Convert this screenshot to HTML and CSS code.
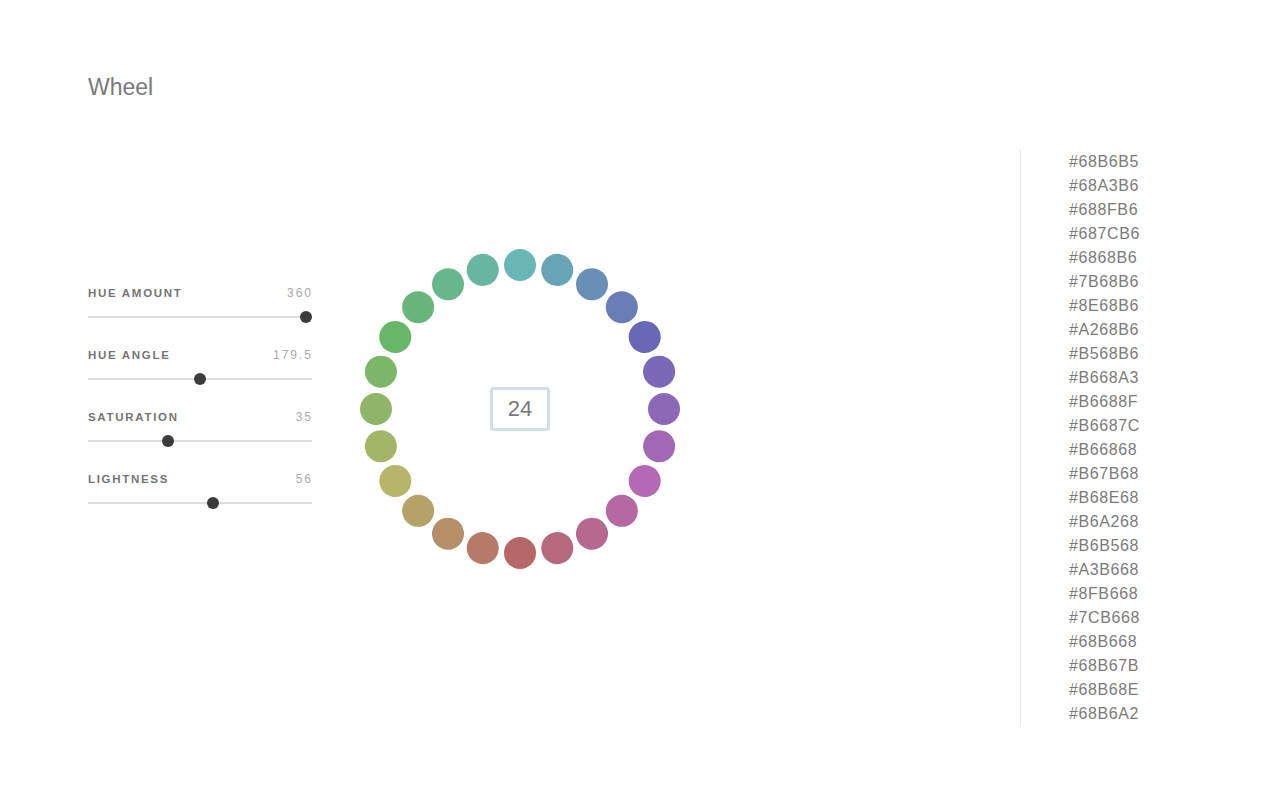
FILE: index.html
```html
<!DOCTYPE html>
<html lang="en">
<head>
<meta charset="utf-8">
<title>Wheel</title>
<link rel="stylesheet" href="styles.css">
</head>
<body>
<div class="app">
  <header class="header">
    <h1 class="title">Wheel</h1>
  </header>
  <main class="main">
    <section class="controls">
      <div class="control">
        <div class="control-head"><span class="label">HUE AMOUNT</span><span class="value">360</span></div>
        <div class="track"><span class="thumb" style="--f:1"></span></div>
      </div>
      <div class="control">
        <div class="control-head"><span class="label">HUE ANGLE</span><span class="value">179.5</span></div>
        <div class="track"><span class="thumb" style="--f:0.5"></span></div>
      </div>
      <div class="control">
        <div class="control-head"><span class="label">SATURATION</span><span class="value">35</span></div>
        <div class="track"><span class="thumb" style="--f:0.35"></span></div>
      </div>
      <div class="control">
        <div class="control-head"><span class="label">LIGHTNESS</span><span class="value">56</span></div>
        <div class="track"><span class="thumb" style="--f:0.56"></span></div>
      </div>
    </section>
    <section class="wheel">
      <span class="dot" style="--a:0deg;background:#68B6B5"></span>
      <span class="dot" style="--a:15deg;background:#68A3B6"></span>
      <span class="dot" style="--a:30deg;background:#688FB6"></span>
      <span class="dot" style="--a:45deg;background:#687CB6"></span>
      <span class="dot" style="--a:60deg;background:#6868B6"></span>
      <span class="dot" style="--a:75deg;background:#7B68B6"></span>
      <span class="dot" style="--a:90deg;background:#8E68B6"></span>
      <span class="dot" style="--a:105deg;background:#A268B6"></span>
      <span class="dot" style="--a:120deg;background:#B568B6"></span>
      <span class="dot" style="--a:135deg;background:#B668A3"></span>
      <span class="dot" style="--a:150deg;background:#B6688F"></span>
      <span class="dot" style="--a:165deg;background:#B6687C"></span>
      <span class="dot" style="--a:180deg;background:#B66868"></span>
      <span class="dot" style="--a:195deg;background:#B67B68"></span>
      <span class="dot" style="--a:210deg;background:#B68E68"></span>
      <span class="dot" style="--a:225deg;background:#B6A268"></span>
      <span class="dot" style="--a:240deg;background:#B6B568"></span>
      <span class="dot" style="--a:255deg;background:#A3B668"></span>
      <span class="dot" style="--a:270deg;background:#8FB668"></span>
      <span class="dot" style="--a:285deg;background:#7CB668"></span>
      <span class="dot" style="--a:300deg;background:#68B668"></span>
      <span class="dot" style="--a:315deg;background:#68B67B"></span>
      <span class="dot" style="--a:330deg;background:#68B68E"></span>
      <span class="dot" style="--a:345deg;background:#68B6A2"></span>
      <div class="count">24</div>
    </section>
    <ul class="hexes">
      <li>#68B6B5</li>
      <li>#68A3B6</li>
      <li>#688FB6</li>
      <li>#687CB6</li>
      <li>#6868B6</li>
      <li>#7B68B6</li>
      <li>#8E68B6</li>
      <li>#A268B6</li>
      <li>#B568B6</li>
      <li>#B668A3</li>
      <li>#B6688F</li>
      <li>#B6687C</li>
      <li>#B66868</li>
      <li>#B67B68</li>
      <li>#B68E68</li>
      <li>#B6A268</li>
      <li>#B6B568</li>
      <li>#A3B668</li>
      <li>#8FB668</li>
      <li>#7CB668</li>
      <li>#68B668</li>
      <li>#68B67B</li>
      <li>#68B68E</li>
      <li>#68B6A2</li>
    </ul>
  </main>
</div>
</body>
</html>
```

FILE: styles.css
```css
* {
  box-sizing: border-box;
}

html, body {
  margin: 0;
  padding: 0;
  background: #ffffff;
}

body {
  font-family: "Liberation Sans", Arial, Helvetica, sans-serif;
  color: #777777;
}

.app {
  width: 1280px;
  height: 800px;
  padding: 0 88px;
}

.header {
  padding-top: 73px;
  height: 149px;
}

.title {
  margin: 0;
  font-size: 23px;
  line-height: 28px;
  font-weight: normal;
  color: #7a7a7a;
}

.main {
  display: flex;
  align-items: flex-start;
}

.controls {
  width: 224px;
  margin-top: 136px;
  display: flex;
  flex-direction: column;
  gap: 24px;
}

.control {
  display: flex;
  flex-direction: column;
  gap: 10px;
}

.control-head {
  display: flex;
  justify-content: space-between;
  align-items: center;
  height: 16px;
}

.label {
  font-size: 11.5px;
  font-weight: bold;
  letter-spacing: 1.7px;
  color: #757575;
}

.value {
  font-size: 12px;
  letter-spacing: 2px;
  margin-right: -1px;
  color: #aaaaaa;
}

.track {
  position: relative;
  height: 12px;
}

.track::before {
  content: "";
  position: absolute;
  left: 0;
  right: 0;
  top: 5px;
  height: 2px;
  background: #dddddd;
}

.thumb {
  position: absolute;
  top: 0;
  left: calc(var(--f) * (100% - 12px));
  width: 12px;
  height: 12px;
  border-radius: 50%;
  background: #3b3b3b;
}

.wheel {
  position: relative;
  width: 320px;
  height: 320px;
  margin-left: 48px;
  margin-top: 100px;
  display: flex;
  align-items: center;
  justify-content: center;
}

.dot {
  position: absolute;
  left: 144px;
  top: 144px;
  width: 32px;
  height: 32px;
  border-radius: 50%;
  transform: rotate(var(--a)) translateY(-144px);
}

.count {
  width: 60px;
  height: 44px;
  border: 3px solid #cfe0f1;
  border-radius: 3px;
  display: flex;
  align-items: center;
  justify-content: center;
  font-size: 22px;
  color: #777777;
}

.hexes {
  list-style: none;
  margin: 0 0 0 auto;
  padding: 1px 0 0 48px;
  width: 172px;
  height: 576px;
  border-left: 1px solid #e6e6e6;
}

.hexes li {
  font-size: 16px;
  line-height: 24px;
  letter-spacing: 0.6px;
  color: #7b7b7b;
}
```
